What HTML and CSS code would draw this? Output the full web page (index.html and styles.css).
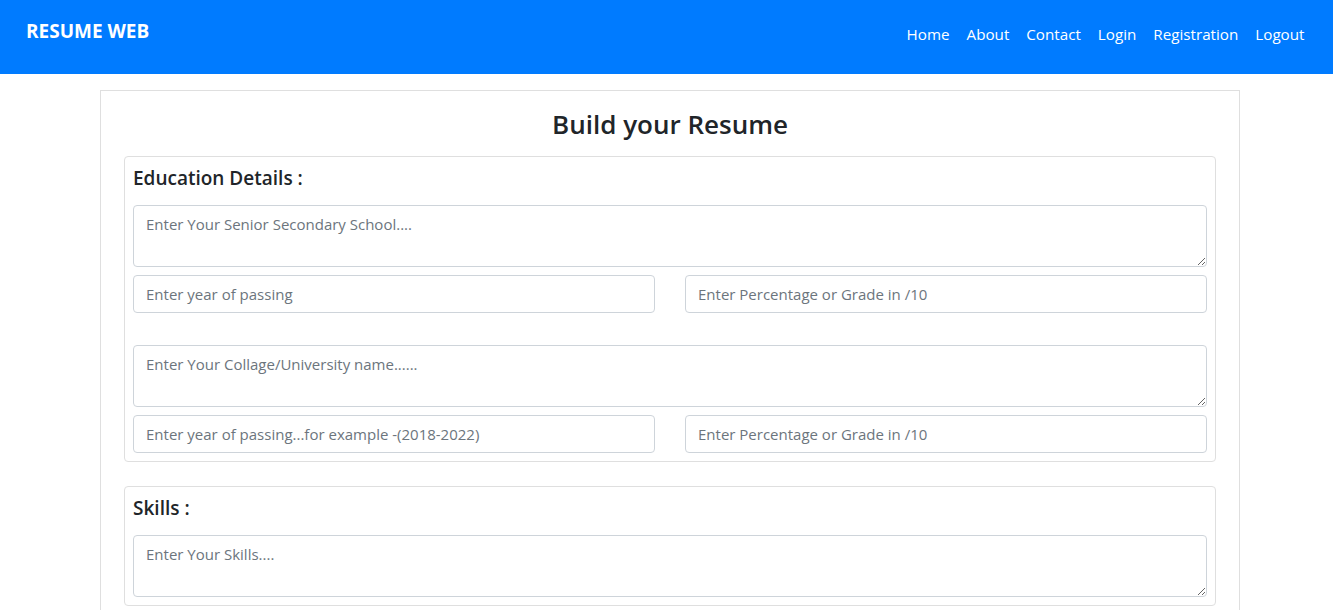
FILE: index.html
```html
<!DOCTYPE html>
<html lang="en">
<head>
<meta charset="utf-8">
<title>Resume Web</title>
<link rel="stylesheet" href="styles.css">
</head>
<body>
<nav class="navbar">
  <a class="brand" href="#">RESUME WEB</a>
  <ul class="nav-links">
    <li><a href="#">Home</a></li>
    <li><a href="#">About</a></li>
    <li><a href="#">Contact</a></li>
    <li><a href="#">Login</a></li>
    <li><a href="#">Registration</a></li>
    <li><a href="#">Logout</a></li>
  </ul>
</nav>
<div class="page">
  <form class="main-card">
    <h2 class="page-title">Build your Resume</h2>
    <fieldset class="section">
      <h5 class="section-title">Education Details :</h5>
      <div class="group">
        <textarea class="field area" placeholder="Enter Your Senior Secondary School...."></textarea>
        <div class="row">
          <input class="field" type="text" placeholder="Enter year of passing">
          <input class="field" type="text" placeholder="Enter Percentage or Grade in /10">
        </div>
      </div>
      <div class="group">
        <textarea class="field area" placeholder="Enter Your Collage/University name......"></textarea>
        <div class="row">
          <input class="field" type="text" placeholder="Enter year of passing...for example -(2018-2022)">
          <input class="field" type="text" placeholder="Enter Percentage or Grade in /10">
        </div>
      </div>
    </fieldset>
    <fieldset class="section">
      <h5 class="section-title">Skills :</h5>
      <div class="group">
        <textarea class="field area" placeholder="Enter Your Skills...."></textarea>
      </div>
    </fieldset>
  </form>
</div>
</body>
</html>
```
FILE: styles.css
```css
* { box-sizing: border-box; }
html, body { margin: 0; padding: 0; }
body {
  font-family: "Open Sans", "Noto Sans", sans-serif;
  font-size: 15px;
  color: #212529;
  background: #fff;
  overflow: hidden;
}
.navbar {
  height: 74px;
  background: #007bff;
  display: flex;
  align-items: flex-start;
  justify-content: space-between;
  padding: 0 20px 0 26px;
}
.brand {
  color: #fff;
  text-decoration: none;
  font-weight: 700;
  font-size: 19px;
  line-height: 24px;
  margin-top: 19px;
}
.nav-links {
  list-style: none;
  margin: 22px 0 0;
  padding: 0;
  display: flex;
}
.nav-links a {
  display: block;
  color: #fff;
  text-decoration: none;
  font-size: 15.2px;
  line-height: 24px;
  padding: 0 8.5px;
}
.page {
  padding: 16px 93px 0 100px;
}
.main-card {
  border: 1px solid #dfdfdf;
  padding: 13px 23px 0;
  min-height: 530px;
}
.page-title {
  margin: 0 0 12px;
  text-align: center;
  font-size: 26px;
  font-weight: 600;
  line-height: 40px;
}
.section {
  border: 1px solid #dfdfdf;
  border-radius: 4px;
  margin: 0 0 24px;
  padding: 9px 8px 8px;
  min-width: 0;
}
.section-title {
  margin: 0 0 15px;
  font-size: 19px;
  font-weight: 600;
  line-height: 24px;
}
.group + .group { margin-top: 32px; }
.field {
  display: block;
  width: 100%;
  font-family: inherit;
  font-size: 15px;
  line-height: 24px;
  color: #495057;
  border: 1px solid #ced4da;
  border-radius: 4px;
  padding: 6px 12px;
  height: 38px;
  background: #fff;
}
.field::placeholder { color: #6c757d; opacity: 1; }
.area {
  height: 62px;
  resize: vertical;
}
.row {
  display: grid;
  grid-template-columns: 1fr 1fr;
  column-gap: 30px;
  margin-top: 8px;
}
```
